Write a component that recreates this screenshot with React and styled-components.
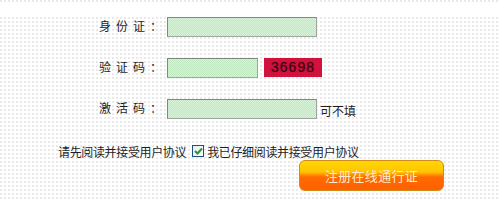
import React from "react";
import styled, { createGlobalStyle } from "styled-components";

const GlobalStyle = createGlobalStyle`
  html, body {
    margin: 0;
    padding: 0;
    background: #fff;
  }
  body {
    font-family: "Noto Sans CJK SC", "Liberation Sans", sans-serif;
    font-size: 12px;
    color: #222;
  }
`;

const dots = `
  background-color: #fff;
  background-image: radial-gradient(circle at 1px 1px, #e9e9e9 0.9px, transparent 1.1px);
  background-size: 4px 4px;
`;

const Page = styled.div`
  width: 500px;
  height: 221px;
  overflow: hidden;
  background: #fff;
`;

const TopStrip = styled.div`
  height: 4px;
  ${dots}
`;

const TopGap = styled.div`
  height: 13px;
  background: #fff;
`;

const Board = styled.div`
  ${dots}
  display: flex;
  flex-direction: column;
  padding-bottom: 9px;
`;

const Fields = styled.div`
  display: flex;
  flex-direction: column;
  gap: 21px;
`;

const Row = styled.div`
  display: flex;
  align-items: center;
  height: 20px;
`;

const Label = styled.div`
  width: 162px;
  display: flex;
  justify-content: flex-end;
  font-size: 12px;
  line-height: 14px;
  color: #1e1e1e;
  margin-top: -3px;
  span {
    letter-spacing: 5px;
  }
`;

const Field = styled.div`
  box-sizing: border-box;
  width: ${(p) => p.$w}px;
  height: 20px;
  margin-left: 5px;
  border: 1px solid #9ea69e;
  border-top-color: #7f897f;
  border-left-color: #7f897f;
  background: repeating-conic-gradient(#bfe8c1 0 25%, #d7f3d8 0 50%) 0 0 / 2px 2px;
`;

const Captcha = styled.div`
  box-sizing: border-box;
  width: 58px;
  height: 19px;
  margin-left: 6px;
  margin-top: -2px;
  background: #d0123c;
  display: flex;
  align-items: center;
  justify-content: center;
  font-family: "Liberation Sans", Arial, sans-serif;
  font-size: 14px;
  letter-spacing: 1px;
  color: #3a0616;
  text-shadow: 0 0 1px #7a0a26;
`;

const Hint = styled.span`
  margin-left: 3px;
  margin-top: 3px;
  font-size: 12px;
  color: #1e1e1e;
`;

const Agree = styled.div`
  display: flex;
  align-items: center;
  margin-top: 25px;
  padding-left: 58px;
  height: 14px;
  font-size: 12px;
  letter-spacing: -0.35px;
  color: #1e1e1e;
`;

const Check = styled.span`
  box-sizing: border-box;
  width: 12px;
  height: 12px;
  margin: 0 3px 0 6px;
  border: 1px solid #1f4f7c;
  background: linear-gradient(135deg, #e8ecef, #fff);
  display: flex;
  align-items: center;
  justify-content: center;
`;

const ButtonRow = styled.div`
  display: flex;
  padding-left: 299px;
  margin-top: 2px;
`;

const Button = styled.button`
  box-sizing: border-box;
  width: 145px;
  height: 31px;
  border: 1px solid #d48a1a;
  border-radius: 6px;
  background: linear-gradient(
    180deg,
    #ffd800 0%,
    #ffc400 38%,
    #ff8c00 48%,
    #ff6a00 56%,
    #ff6000 100%
  );
  color: #ffeccc;
  font-family: "Noto Sans CJK SC", sans-serif;
  font-size: 13px;
  letter-spacing: 0.3px;
  padding: 0;
  cursor: pointer;
`;

const BottomGap = styled.div`
  height: 20px;
  background: #fff;
`;

export default function App() {
  return (
    <Page>
      <GlobalStyle />
      <TopStrip />
      <TopGap />
      <Board>
        <Fields>
          <Row>
            <Label>
              <span>身份证</span>：
            </Label>
            <Field $w={150} />
          </Row>
          <Row>
            <Label>
              <span>验证码</span>：
            </Label>
            <Field $w={91} />
            <Captcha>36698</Captcha>
          </Row>
          <Row>
            <Label>
              <span>激活码</span>：
            </Label>
            <Field $w={150} />
            <Hint>可不填</Hint>
          </Row>
        </Fields>
        <Agree>
          请先阅读并接受用户协议
          <Check>
            <svg width="9" height="8" viewBox="0 0 9 8">
              <path d="M1 4 L3.5 6.5 L8 1.5" fill="none" stroke="#1e9a2a" strokeWidth="2" />
            </svg>
          </Check>
          我已仔细阅读并接受用户协议
        </Agree>
        <ButtonRow>
          <Button>注册在线通行证</Button>
        </ButtonRow>
      </Board>
      <BottomGap />
    </Page>
  );
}
